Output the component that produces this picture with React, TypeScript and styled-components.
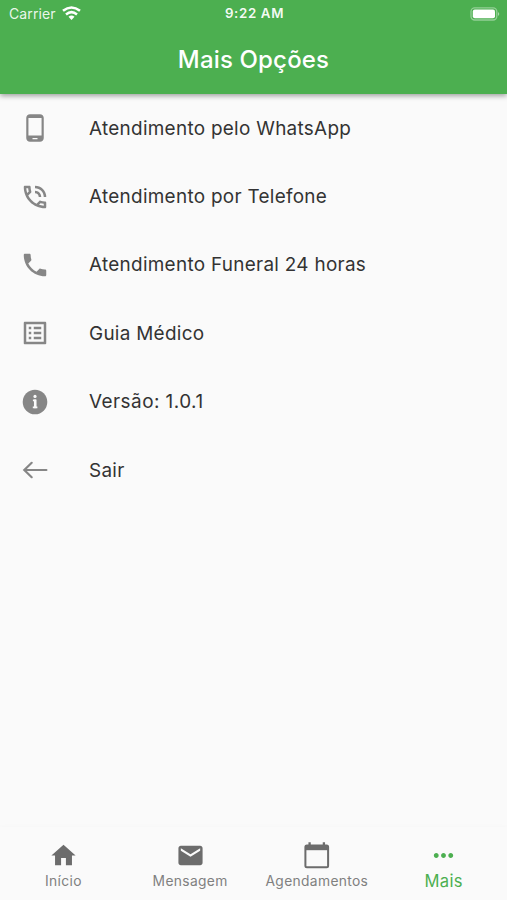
import React from "react";
import styled, { createGlobalStyle } from "styled-components";
import { MdPhoneAndroid, MdOutlinePhoneInTalk, MdPhone, MdOutlineListAlt, MdHome, MdMail, MdMoreHoriz } from "react-icons/md";

const GlobalStyle = createGlobalStyle`
  * { box-sizing: border-box; }
  body { margin: 0; background: #fafafa; font-family: Inter, "Liberation Sans", sans-serif; }
`;
const Screen = styled.div`
  width: 507px; height: 900px; display: flex; flex-direction: column; overflow: hidden; background: #fafafa;
`;
const Header = styled.header`
  height: 94px; flex: none; background: #4caf50; color: #fff;
  box-shadow: 0 2px 5px rgba(0, 0, 0, 0.36);
`;
const StatusBar = styled.div`
  height: 27px; display: grid; grid-template-columns: 1fr auto 1fr; align-items: center;
  padding: 0 7px 0 9px; font-size: 14px; line-height: 27px;
`;
const Carrier = styled.div`
  display: flex; align-items: center; gap: 6px; letter-spacing: 0.1px; color: rgba(255, 255, 255, 0.9);
  height: 27px;
  svg { margin-top: -1px; }
`;
const Clock = styled.div`
  font-weight: 600; font-size: 13.3px; letter-spacing: 0.65px; height: 27px; color: rgba(255, 255, 255, 0.94);
`;
const BatteryIcon = styled.svg`
  justify-self: end;
`;
const Title = styled.h1`
  margin: 0; height: 67px; line-height: 66px; text-align: center;
  font-size: 24px; font-weight: 500; letter-spacing: 0.16px;
`;
const List = styled.ul`
  list-style: none; margin: 0; padding: 0; flex: 1;
`;
const Row = styled.li`
  height: 68.4px; display: flex; align-items: center; padding-left: 20px; gap: 39px; color: #333;
  svg { color: #868686; width: 30px; height: 30px; flex: none; }
`;
const RowLabel = styled.span<{ $wide?: boolean }>`
  font-size: 18.9px; line-height: 24px; padding-top: 1px;
  letter-spacing: ${p => (p.$wide ? 0.47 : 0.3)}px;
`;
const TabBar = styled.nav`
  height: 73px; flex: none; display: grid; grid-template-columns: repeat(4, 1fr); background: #fafafa;
  box-shadow: 0 0 5px rgba(0, 0, 0, 0.025);
`;
const Tab = styled.div<{ $active?: boolean }>`
  display: flex; flex-direction: column; align-items: center; padding-top: 14px; line-height: 22px;
  color: ${p => (p.$active ? "#4caf50" : "#808080")};
  font-size: ${p => (p.$active ? 16.6 : 13.8)}px; letter-spacing: 0.35px;
  svg { width: 29px; height: 29px; flex: none; color: ${p => (p.$active ? "#4caf50" : "#6c6c6c")}; }
`;

const InfoIcon = () => (
  <svg viewBox="0 0 30 30">
    <circle cx="15" cy="15" r="12.3" fill="currentColor" />
    <circle cx="15" cy="9.4" r="1.6" fill="#fafafa" />
    <path d="M12.9 13.4H15.3V20.6M12.8 20.4H17.4" stroke="#fafafa" strokeWidth="1.7" fill="none" />
    <path d="M15.2 12.6V21.2" stroke="#fafafa" strokeWidth="2.5" />
  </svg>
);
const BackIcon = () => (
  <svg viewBox="0 0 30 30" fill="none" stroke="currentColor" strokeWidth="2.2" strokeLinecap="round">
    <path d="M4.5 15H26.4M11.7 7.8L4.3 15L11.7 22.2" />
  </svg>
);
const CalendarIcon = () => (
  <svg viewBox="0 0 29 29" fill="none" stroke="currentColor">
    <rect x="3.4" y="4.4" width="22.7" height="21.8" rx="1.5" strokeWidth="2" />
    <path d="M3.4 6.7H26.1" strokeWidth="5" />
    <path d="M7.6 1.2V5M21.9 1.2V5" strokeWidth="2.3" />
  </svg>
);

const items = [
  [MdPhoneAndroid, "Atendimento pelo WhatsApp"],
  [MdOutlinePhoneInTalk, "Atendimento por Telefone"],
  [MdPhone, "Atendimento Funeral 24 horas"],
  [MdOutlineListAlt, "Guia Médico"],
  [InfoIcon, "Versão: 1.0.1"],
  [BackIcon, "Sair"],
] as const;
const tabs = [
  [MdHome, "Início"],
  [MdMail, "Mensagem"],
  [CalendarIcon, "Agendamentos"],
  [MdMoreHoriz, "Mais"],
] as const;

export default function App() {
  return (
    <>
      <GlobalStyle />
      <Screen>
        <Header>
          <StatusBar>
            <Carrier>
              Carrier
              <svg width="19" height="14" viewBox="0 0 19 14" fill="none" stroke="#fff" strokeWidth="2.6">
                <path d="M1 4.8Q9.5-1.8 18 4.8M4 8.4Q9.5 4 15 8.4" />
                <path d="M6.5 10.7Q9.5 8.2 12.5 10.7L9.5 14Z" fill="#fff" stroke="none" />
              </svg>
            </Carrier>
            <Clock>9:22 AM</Clock>
            <BatteryIcon width="30" height="14" viewBox="0 0 30 14" fill="none">
              <rect x="1" y=".8" width="25.8" height="12.2" rx="3.7" stroke="#fff" strokeOpacity=".4" strokeWidth="1.3" />
              <rect x="2.8" y="2.5" width="22.2" height="8.8" rx="2" fill="#fff" />
              <path d="M28 5Q30.5 7 28 9Z" fill="#fff" opacity=".5" />
            </BatteryIcon>
          </StatusBar>
          <Title>Mais Opções</Title>
        </Header>
        <List>
          {items.map(([Icon, label]) => (
            <Row key={label}>
              <Icon />
              <RowLabel $wide={label.startsWith("Versão")}>{label}</RowLabel>
            </Row>
          ))}
        </List>
        <TabBar>
          {tabs.map(([Icon, label]) => (
            <Tab key={label} $active={label === "Mais"}>
              <Icon />
              <span>{label}</span>
            </Tab>
          ))}
        </TabBar>
      </Screen>
    </>
  );
}
